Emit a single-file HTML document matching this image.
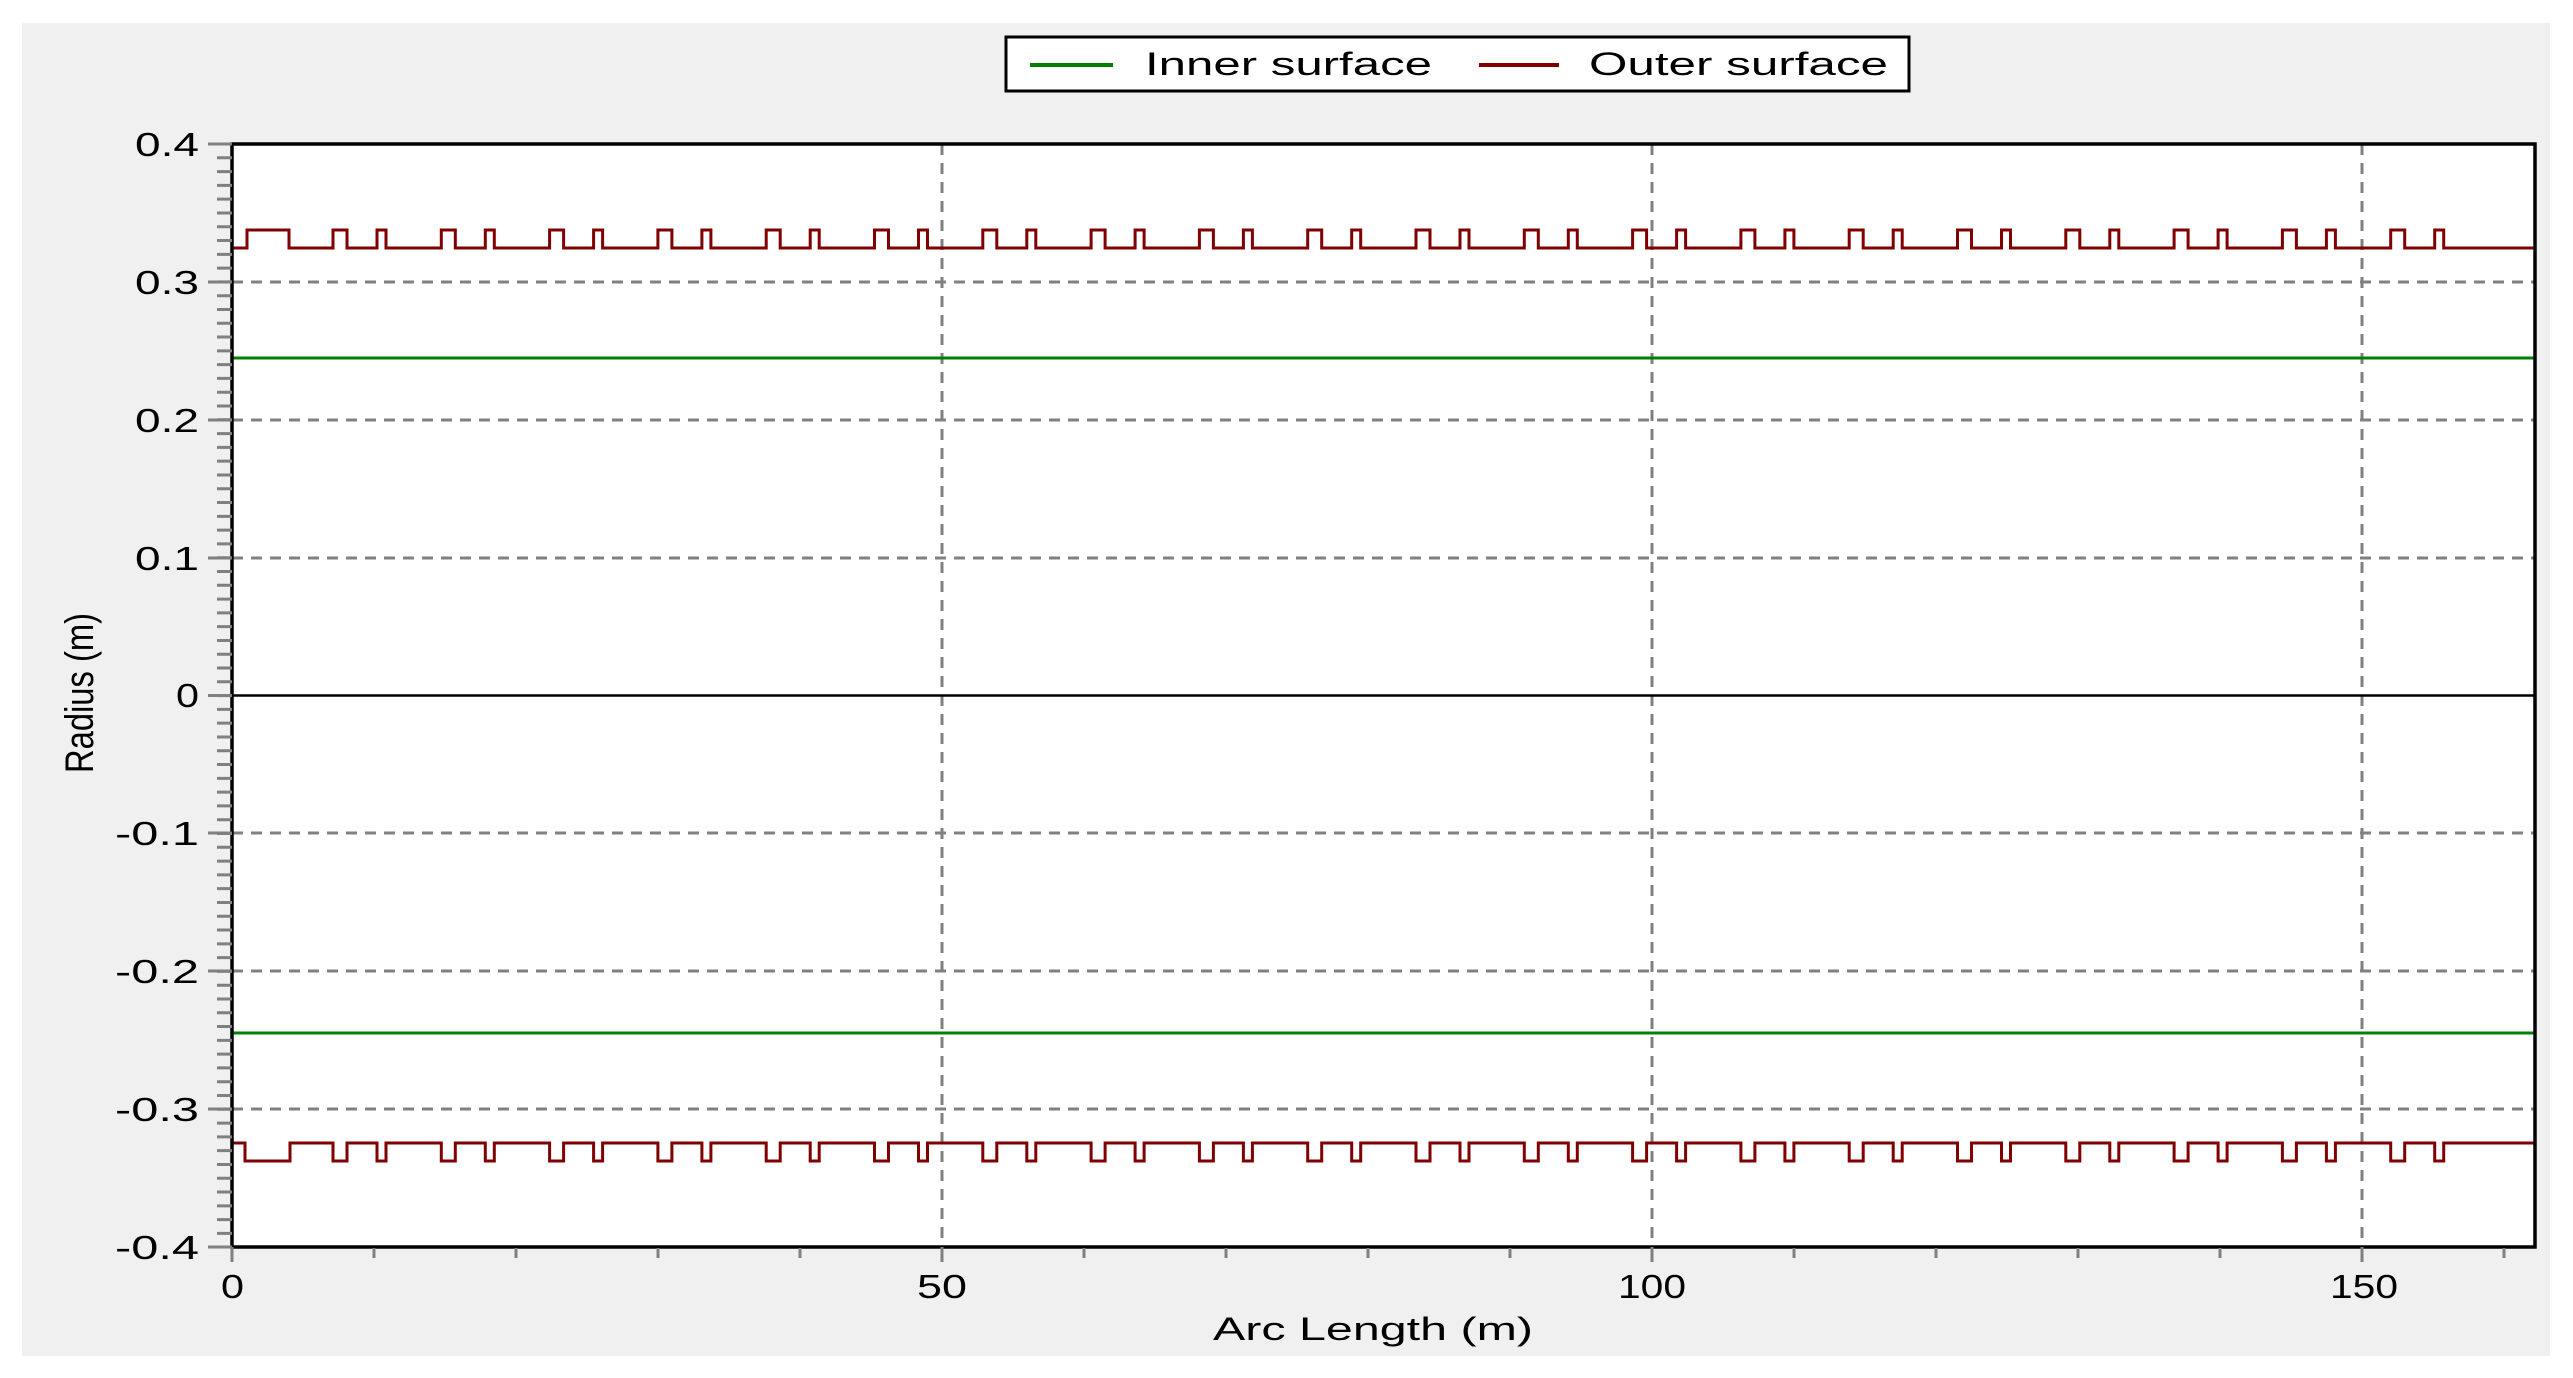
<!DOCTYPE html>
<html><head><meta charset="utf-8"><style>html,body{margin:0;padding:0;background:#fff}svg{display:block}</style></head>
<body>
<svg width="2573" height="1378" viewBox="0 0 2573 1378" xmlns="http://www.w3.org/2000/svg" font-family="'Liberation Sans', sans-serif">
<rect x="22" y="23" width="2528" height="1333" fill="#f0f0f0"/>
<!-- legend -->
<rect x="1006" y="37" width="903" height="54" fill="#fff" stroke="#000" stroke-width="3"/>
<line x1="1030" y1="65" x2="1113" y2="65" stroke="#008000" stroke-width="4"/>
<text x="1145" y="75" font-size="32" textLength="287" lengthAdjust="spacingAndGlyphs" fill="#000">Inner surface</text>
<line x1="1479" y1="65" x2="1559" y2="65" stroke="#800000" stroke-width="4"/>
<text x="1589" y="75" font-size="32" textLength="299" lengthAdjust="spacingAndGlyphs" fill="#000">Outer surface</text>
<!-- plot area -->
<rect x="232" y="144" width="2303" height="1103" fill="#fff"/>
<g stroke="#808080" stroke-width="3" stroke-dasharray="11 8">
<line x1="232" y1="282" x2="2535" y2="282"/>
<line x1="232" y1="420" x2="2535" y2="420"/>
<line x1="232" y1="558" x2="2535" y2="558"/>
<line x1="232" y1="833" x2="2535" y2="833"/>
<line x1="232" y1="971" x2="2535" y2="971"/>
<line x1="232" y1="1109" x2="2535" y2="1109"/>
<line x1="942" y1="144" x2="942" y2="1247"/>
<line x1="1652" y1="144" x2="1652" y2="1247"/>
<line x1="2362" y1="144" x2="2362" y2="1247"/>
</g>
<line x1="232" y1="695.5" x2="2535" y2="695.5" stroke="#000" stroke-width="2.5"/>
<line x1="232" y1="358" x2="2535" y2="358" stroke="#008000" stroke-width="3"/>
<line x1="232" y1="1033" x2="2535" y2="1033" stroke="#008000" stroke-width="3"/>
<path fill="none" stroke="#800000" stroke-width="3" d="M232,248 H247 V230 H289 V248 H333
v-18 h14 v18 h30 v-18 h9 v18 h55.3 v-18 h14 v18 h30 v-18 h9 v18 h55.3 v-18 h14 v18 h30 v-18 h9 v18 h55.3 v-18 h14 v18 h30 v-18 h9 v18 h55.3
v-18 h14 v18 h30 v-18 h9 v18 h55.3 v-18 h14 v18 h30 v-18 h9 v18 h55.3 v-18 h14 v18 h30 v-18 h9 v18 h55.3 v-18 h14 v18 h30 v-18 h9 v18 h55.3
v-18 h14 v18 h30 v-18 h9 v18 h55.3 v-18 h14 v18 h30 v-18 h9 v18 h55.3 v-18 h14 v18 h30 v-18 h9 v18 h55.3 v-18 h14 v18 h30 v-18 h9 v18 h55.3
v-18 h14 v18 h30 v-18 h9 v18 h55.3 v-18 h14 v18 h30 v-18 h9 v18 h55.3 v-18 h14 v18 h30 v-18 h9 v18 h55.3 v-18 h14 v18 h30 v-18 h9 v18 h55.3
v-18 h14 v18 h30 v-18 h9 v18 h55.3 v-18 h14 v18 h30 v-18 h9 v18 h55.3 v-18 h14 v18 h30 v-18 h9 v18 h55.3 v-18 h14 v18 h30 v-18 h9 v18 H2535"/>
<path fill="none" stroke="#800000" stroke-width="3" d="M232,1143 H245 V1161 H290 V1143 H333
v18 h14 v-18 h30 v18 h9 v-18 h55.3 v18 h14 v-18 h30 v18 h9 v-18 h55.3 v18 h14 v-18 h30 v18 h9 v-18 h55.3 v18 h14 v-18 h30 v18 h9 v-18 h55.3
v18 h14 v-18 h30 v18 h9 v-18 h55.3 v18 h14 v-18 h30 v18 h9 v-18 h55.3 v18 h14 v-18 h30 v18 h9 v-18 h55.3 v18 h14 v-18 h30 v18 h9 v-18 h55.3
v18 h14 v-18 h30 v18 h9 v-18 h55.3 v18 h14 v-18 h30 v18 h9 v-18 h55.3 v18 h14 v-18 h30 v18 h9 v-18 h55.3 v18 h14 v-18 h30 v18 h9 v-18 h55.3
v18 h14 v-18 h30 v18 h9 v-18 h55.3 v18 h14 v-18 h30 v18 h9 v-18 h55.3 v18 h14 v-18 h30 v18 h9 v-18 h55.3 v18 h14 v-18 h30 v18 h9 v-18 h55.3
v18 h14 v-18 h30 v18 h9 v-18 h55.3 v18 h14 v-18 h30 v18 h9 v-18 h55.3 v18 h14 v-18 h30 v18 h9 v-18 h55.3 v18 h14 v-18 h30 v18 h9 v-18 H2535"/>
<rect x="232" y="144" width="2303" height="1103" fill="none" stroke="#000" stroke-width="3.5"/>
<!-- y ticks -->
<line x1="224.5" y1="144" x2="224.5" y2="1248" stroke="#808080" stroke-width="15" stroke-dasharray="3 10.79" stroke-dashoffset="1.5"/>
<g stroke="#808080" stroke-width="3">
<line x1="208" y1="144" x2="232" y2="144"/><line x1="208" y1="282" x2="232" y2="282"/>
<line x1="208" y1="420" x2="232" y2="420"/><line x1="208" y1="558" x2="232" y2="558"/>
<line x1="208" y1="695.5" x2="232" y2="695.5"/><line x1="208" y1="833" x2="232" y2="833"/>
<line x1="208" y1="971" x2="232" y2="971"/><line x1="208" y1="1109" x2="232" y2="1109"/>
<line x1="208" y1="1247" x2="232" y2="1247"/>
</g>
<!-- x ticks -->
<line x1="232" y1="1253" x2="2536" y2="1253" stroke="#808080" stroke-width="10" stroke-dasharray="3 139" stroke-dashoffset="1.5"/>
<g stroke="#808080" stroke-width="3">
<line x1="232" y1="1247" x2="232" y2="1262"/><line x1="942" y1="1247" x2="942" y2="1262"/>
<line x1="1652" y1="1247" x2="1652" y2="1262"/><line x1="2362" y1="1247" x2="2362" y2="1262"/>
</g>
<g font-size="33" fill="#000" lengthAdjust="spacingAndGlyphs">
<text x="135" y="156" textLength="64" lengthAdjust="spacingAndGlyphs">0.4</text>
<text x="135" y="294" textLength="64" lengthAdjust="spacingAndGlyphs">0.3</text>
<text x="135" y="432" textLength="64" lengthAdjust="spacingAndGlyphs">0.2</text>
<text x="135" y="570" textLength="64" lengthAdjust="spacingAndGlyphs">0.1</text>
<text x="176" y="707" textLength="23" lengthAdjust="spacingAndGlyphs">0</text>
<text x="115" y="845" textLength="84" lengthAdjust="spacingAndGlyphs">-0.1</text>
<text x="115" y="983" textLength="84" lengthAdjust="spacingAndGlyphs">-0.2</text>
<text x="115" y="1121" textLength="84" lengthAdjust="spacingAndGlyphs">-0.3</text>
<text x="115" y="1259" textLength="84" lengthAdjust="spacingAndGlyphs">-0.4</text>
</g>
<g font-size="33" fill="#000">
<text x="221" y="1298" textLength="23" lengthAdjust="spacingAndGlyphs">0</text>
<text x="917" y="1298" textLength="50" lengthAdjust="spacingAndGlyphs">50</text>
<text x="1618" y="1298" textLength="68" lengthAdjust="spacingAndGlyphs">100</text>
<text x="2330" y="1298" textLength="68" lengthAdjust="spacingAndGlyphs">150</text>
</g>
<text x="1213" y="1340" font-size="32" textLength="320" lengthAdjust="spacingAndGlyphs" fill="#000">Arc Length (m)</text>
<text transform="translate(93,773) rotate(-90)" font-size="40" textLength="160" lengthAdjust="spacingAndGlyphs" fill="#000">Radius (m)</text>
</svg>
</body></html>
